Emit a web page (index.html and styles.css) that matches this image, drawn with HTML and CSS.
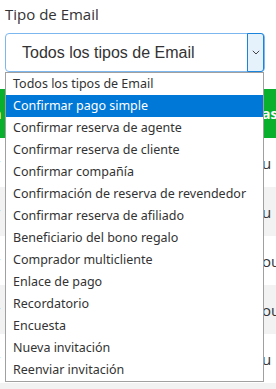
FILE: index.html
```html
<!DOCTYPE html>
<html lang="es">
<head>
<meta charset="utf-8">
<link rel="stylesheet" href="styles.css">
</head>
<body>
<div class="page">
  <div class="label">Tipo de Email</div>
  <div class="field">
    <div class="select">
      <span class="select-text">Todos los tipos de Email</span>
      <span class="arrow"><svg width="8" height="5" viewBox="0 0 8 5"><polyline points="0.8,0.8 4,4 7.2,0.8" fill="none" stroke="#444" stroke-width="1"/></svg></span>
    </div>
    <ul class="list">
      <li>Todos los tipos de Email</li>
      <li class="sel">Confirmar pago simple</li>
      <li>Confirmar reserva de agente</li>
      <li>Confirmar reserva de cliente</li>
      <li>Confirmar compañía</li>
      <li>Confirmación de reserva de revendedor</li>
      <li>Confirmar reserva de afiliado</li>
      <li>Beneficiario del bono regalo</li>
      <li>Comprador multicliente</li>
      <li>Enlace de pago</li>
      <li>Recordatorio</li>
      <li>Encuesta</li>
      <li>Nueva invitación</li>
      <li>Reenviar invitación</li>
    </ul>
  </div>
  <div class="table">
    <div class="row head"><span class="c1">a</span><span class="c2">asi</span></div>
    <div class="row"><span class="c1">r</span><span class="c2">u</span></div>
    <div class="row alt"><span class="c1">r</span><span class="c2">u</span></div>
    <div class="row"><span class="c1">r</span><span class="c2">ou</span></div>
    <div class="row alt"><span class="c1">r</span><span class="c2">ou</span></div>
    <div class="row"><span class="c1">r</span><span class="c2">u</span></div>
    <div class="row alt"><span class="c1"></span><span class="c2"></span></div>
  </div>
</div>
</body>
</html>
```
FILE: styles.css
```css
html, body { margin: 0; padding: 0; background: #fff; overflow: hidden; }
body { width: 276px; height: 389px; font-family: "Open Sans", "Noto Sans", sans-serif; }
.page { padding-top: 4px; }
.label { font-size: 15px; line-height: 20px; height: 20px; color: #333; margin-left: 5px; margin-bottom: 9px; }
.field { position: relative; margin: 0 11px 0 5px; }
.select { height: 39px; box-sizing: border-box; border: 1px solid #7cb7ef; border-radius: 4px; display: flex; background: #fff; }
.select-text { flex: 1; padding-left: 16px; font-family: "Liberation Sans", Arial, sans-serif; font-size: 16px; line-height: 37px; color: #333; }
.arrow { width: 15px; margin: -1px 0 -1px 0; border: 1px solid #1a84dc; background: #e5f1fb; border-radius: 0 3px 3px 0; display: flex; align-items: center; justify-content: center; }
.list { position: absolute; left: 0; top: 39px; width: 259px; box-sizing: border-box; margin: 0; padding: 0; list-style: none; background: #fff; border: 1px solid #a0a0a0; z-index: 2; }
.list li { height: 22px; line-height: 22px; padding-left: 7px; font-family: "Noto Sans", sans-serif; font-size: 12.5px; color: #333; white-space: nowrap; }
.list li.sel { background: #0078d7; color: #fff; }
.table { margin-top: 17px; overflow: hidden; }
.row { height: 49px; display: flex; justify-content: space-between; align-items: center; font-size: 15px; color: #333; }
.row.alt { background: #f2f2f2; }
.row.head { background: #08b02e; color: #fff; font-weight: bold; font-size: 14px; }
.c1 { margin-left: -6px; }
.c2 { margin-right: -20px; width: 34px; }
.head .c1 { margin-left: -7px; }
.head .c2 { margin-right: -24px; width: 38px; }
```
